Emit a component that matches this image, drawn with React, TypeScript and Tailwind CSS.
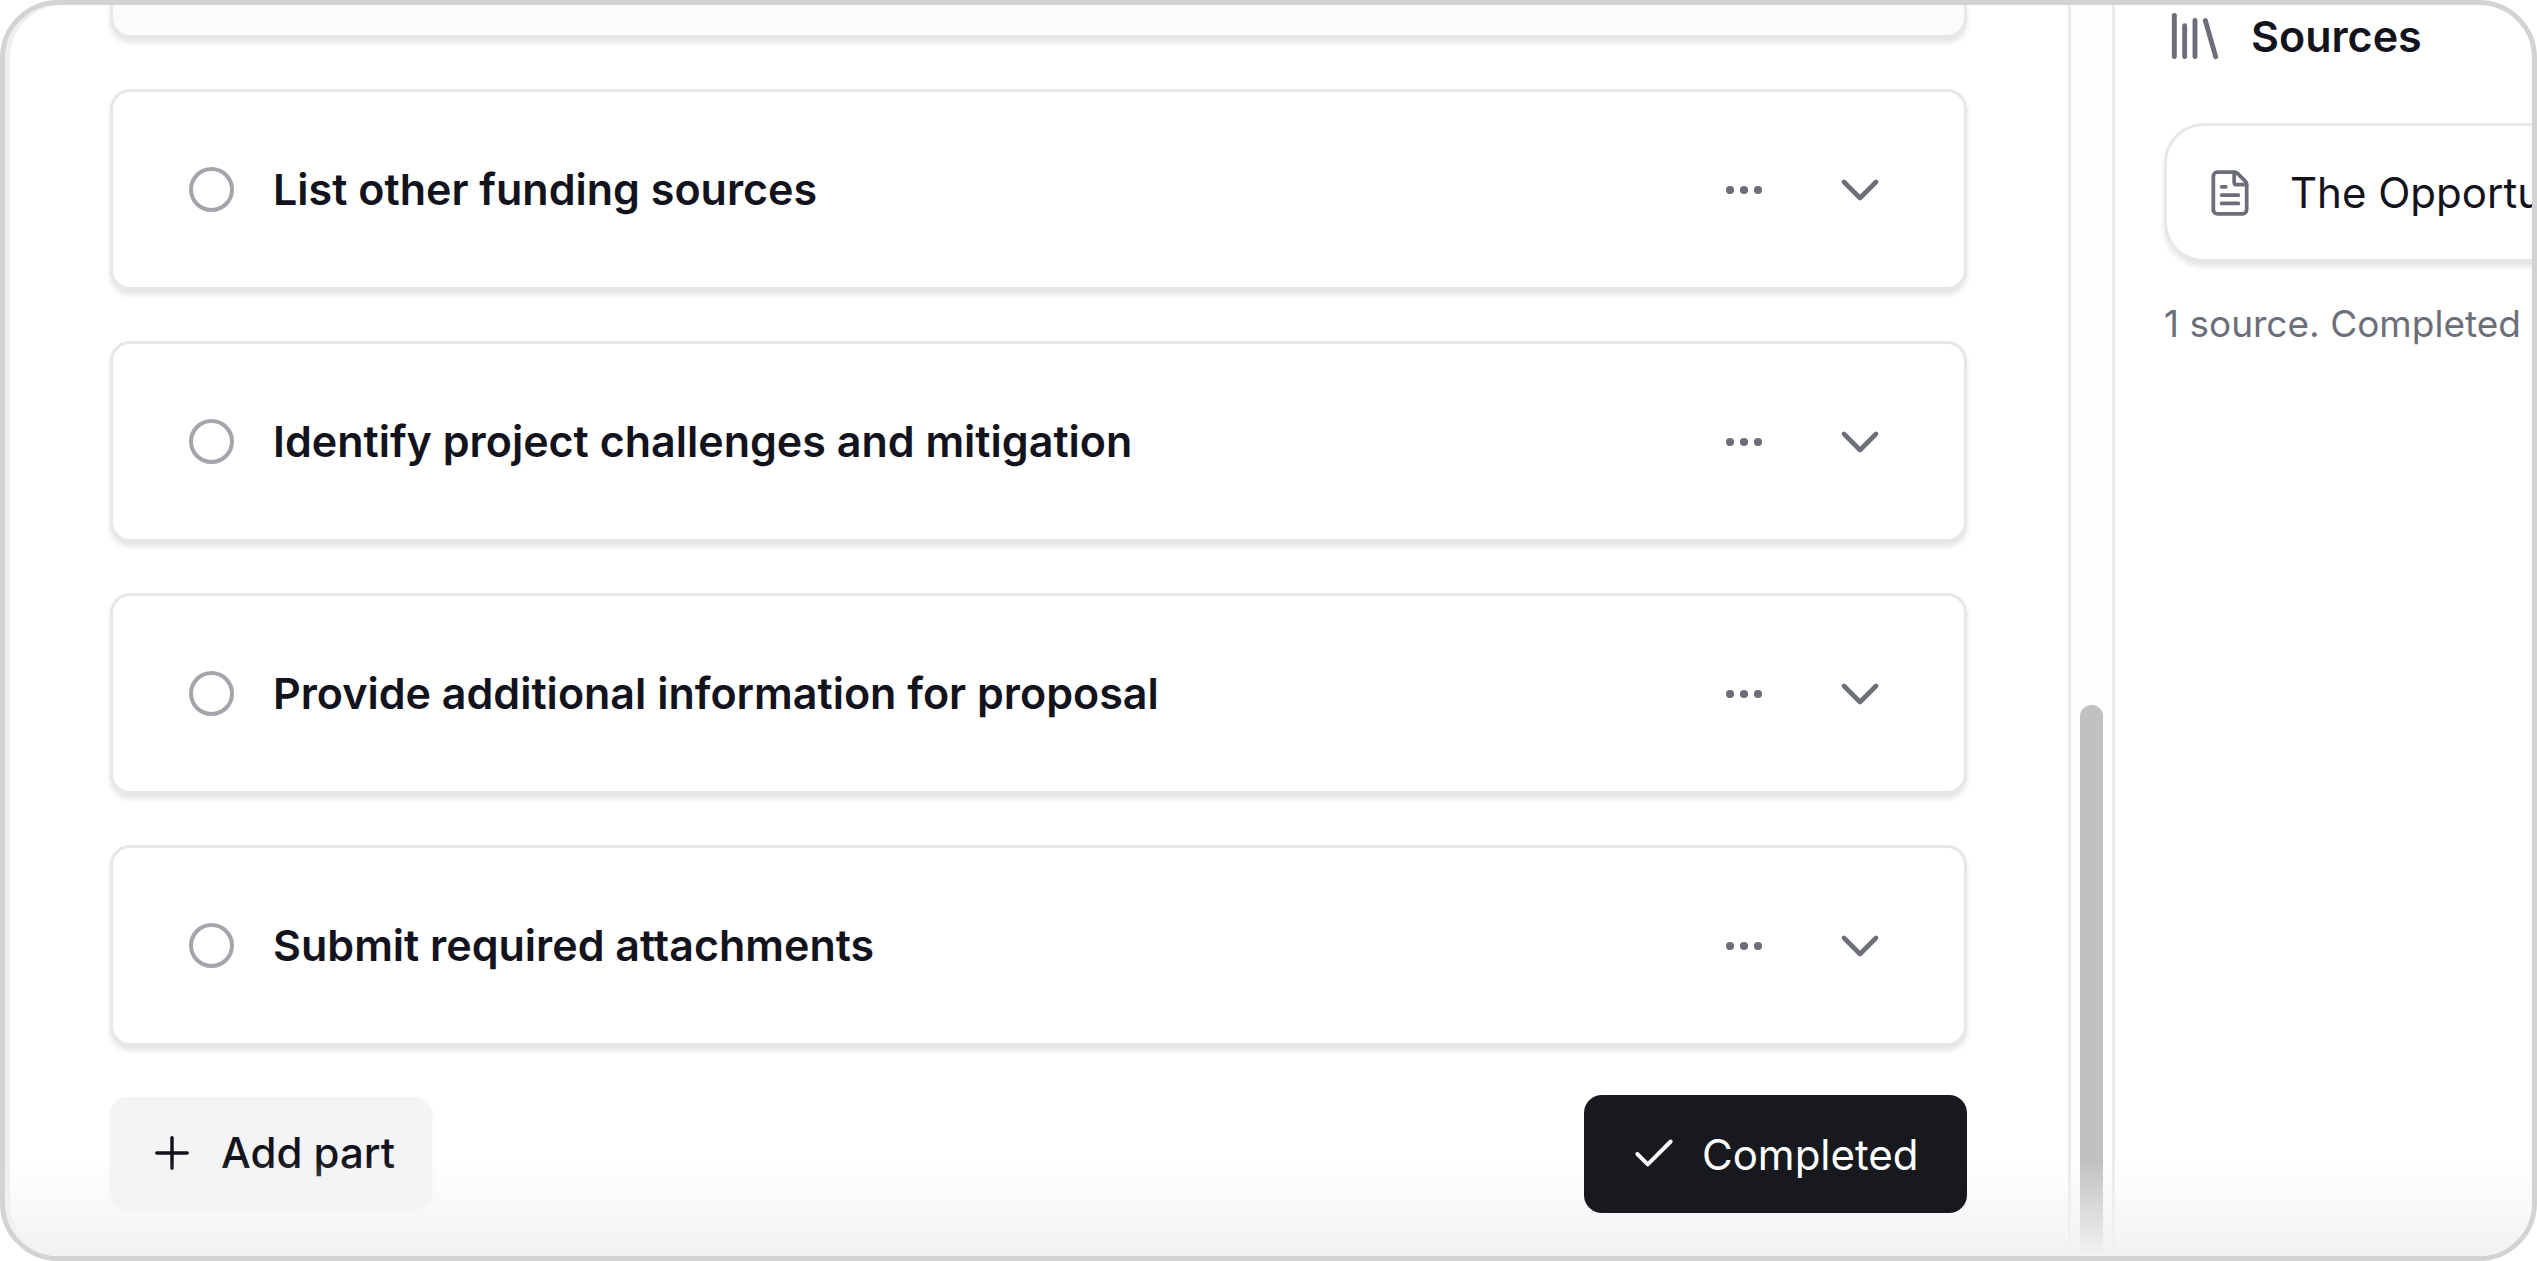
import { Check, ChevronDown, Ellipsis, FileText, Library, Plus } from "lucide-react";

const parts = [
  "List other funding sources",
  "Identify project challenges and mitigation",
  "Provide additional information for proposal",
  "Submit required attachments",
];

function PartCard({ title }: { title: string }) {
  return (
    <div className="flex h-[201px] shrink-0 items-center justify-between rounded-[20px] border-[3px] border-[#e6e7e9] bg-white pl-[76px] pr-[72px] shadow-[0_5px_5px_rgba(24,25,31,0.11)]">
      <div className="flex items-center gap-[39px]">
        <div className="h-[45px] w-[45px] rounded-full border-4 border-[#a3a5aa]" />
        <span className="text-[43px] font-semibold leading-none text-[#12131c]">{title}</span>
      </div>
      <div className="flex items-center gap-[60px] text-[#6c6e79]">
        <Ellipsis size={48} strokeWidth={2.1} />
        <ChevronDown size={64} strokeWidth={1.75} />
      </div>
    </div>
  );
}

export default function App() {
  return (
    <div className="relative flex h-[1261px] w-[2537px] overflow-hidden rounded-[58px] border-[5px] border-[#d2d4d3] bg-white font-['Inter',sans-serif] shadow-[inset_5px_0_0_#eeeff0]">
      <main className="flex w-[2063px] shrink-0 flex-col pl-[105px] pr-[101px]">
        <div className="h-[33px] shrink-0 rounded-b-[20px] border-x-[3px] border-b-[3px] border-[#e6e7e9] bg-[#fafbfa] shadow-[0_5px_5px_rgba(24,25,31,0.11)]" />
        <div className="mt-[51px] flex flex-col gap-[51px]">
          {parts.map((p) => (
            <PartCard key={p} title={p} />
          ))}
        </div>
        <div className="mt-[49px] flex items-center justify-between">
          <button className="mb-[3px] flex h-[111px] w-[322px] items-center gap-[23px] rounded-[18px] bg-[#f4f4f5] pl-[36px] text-[42px] font-medium text-[#12131c] shadow-[0_2px_5px_rgba(24,25,31,0.05)]">
            <Plus size={52} strokeWidth={1.6} />
            <span>Add part</span>
          </button>
          <button className="relative z-10 flex h-[118px] w-[383px] items-center gap-[23px] rounded-[18px] bg-[#18191f] pl-[45px] text-[42px] font-normal text-white">
            <Check size={50} strokeWidth={1.9} />
            <span>Completed</span>
          </button>
        </div>
      </main>

      <div className="flex w-[47px] shrink-0 flex-col justify-end border-x-[3px] border-[#eaebec] bg-[#fdfdfd] px-[9px]">
        <div className="h-[551px] rounded-t-[12px] bg-[#c1c1c4]" />
      </div>

      <aside className="min-w-0 flex-1 pl-[49px]">
        <div className="flex items-center gap-[25px]">
          <Library size={62} strokeWidth={1.9} className="shrink-0 text-[#6c6e79]" />
          <h2 className="text-[43px] font-semibold leading-none text-[#12131c]">Sources</h2>
        </div>
        <div className="mt-[56px] flex h-[139px] w-[700px] items-center gap-[35px] rounded-[40px] border-[3px] border-[#e6e7e9] bg-white pl-[38px] shadow-[0_5px_5px_rgba(24,25,31,0.11)]">
          <FileText size={50} strokeWidth={1.8} className="shrink-0 text-[#6c6e79]" />
          <span className="whitespace-nowrap text-[42px] font-normal text-[#12131c]">The Opportunity</span>
        </div>
        <p className="mt-[43px] whitespace-nowrap text-[37px] leading-none text-[#6c6e79]">1 source. Completed parts</p>
      </aside>

      <div className="pointer-events-none absolute inset-x-0 bottom-0 h-[96px] bg-gradient-to-b from-[#ffffff00] to-[#f1f2f2]" />
    </div>
  );
}
